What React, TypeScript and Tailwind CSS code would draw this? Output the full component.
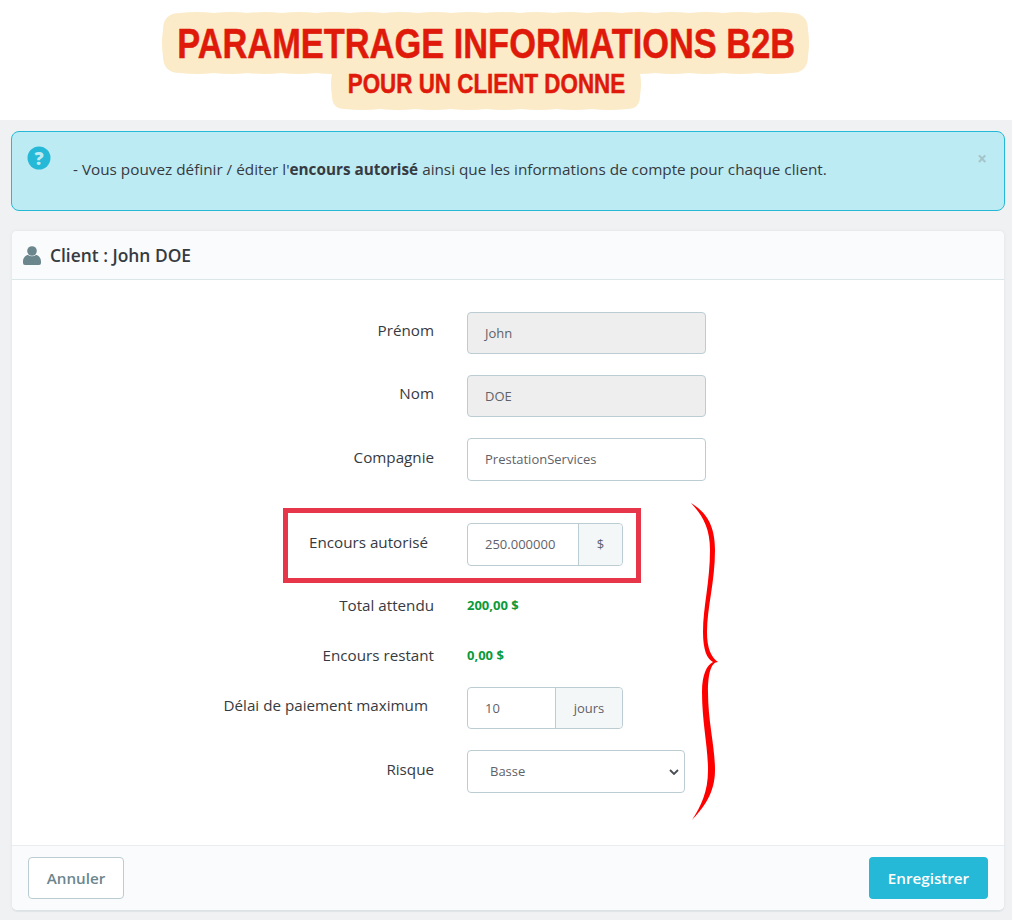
import React from "react";

const Label = ({ children, pr = "pr-[33px]", top = "pt-[8px]" }: { children: React.ReactNode; pr?: string; top?: string }) => (
  <div className={`w-[455px] shrink-0 text-right text-[15.2px] leading-[21px] text-[#363a41] ${pr} ${top}`}>{children}</div>
);

const boxBase = "h-[42px] rounded-[4px] border border-[#bbcdd2] text-[13px] text-[#5f6268] flex items-center";

// Scalloped outline of the hand-cut title sticker, walked clockwise around a rounded box.
function wavy(x0: number, y0: number, x1: number, y1: number, r: number, step: number) {
  const horiz = (from: number, to: number, y: number, out: number) => {
    const n = Math.max(1, Math.round(Math.abs(to - from) / step));
    const d = (to - from) / n;
    let s = "";
    for (let i = 0; i < n; i++) s += `Q${from + d * (i + 0.5)} ${y + out} ${from + d * (i + 1)} ${y} `;
    return s;
  };
  const vert = (from: number, to: number, x: number, out: number) => {
    const n = Math.max(1, Math.round(Math.abs(to - from) / step));
    const d = (to - from) / n;
    let s = "";
    for (let i = 0; i < n; i++) s += `Q${x + out} ${from + d * (i + 0.5)} ${x} ${from + d * (i + 1)} `;
    return s;
  };
  return (
    `M${x0 + r} ${y0} ` +
    horiz(x0 + r, x1 - r, y0, -2) +
    `Q${x1} ${y0} ${x1} ${y0 + r} ` +
    vert(y0 + r, y1 - r, x1, 2) +
    `Q${x1} ${y1} ${x1 - r} ${y1} ` +
    horiz(x1 - r, x0 + r, y1, 2) +
    `Q${x0} ${y1} ${x0} ${y1 - r} ` +
    vert(y1 - r, y0 + r, x0, -2) +
    `Q${x0} ${y0} ${x0 + r} ${y0} Z`
  );
}

export default function App() {
  return (
    <div className="w-[1012px] h-[920px] overflow-hidden bg-[#eff1f2] font-['Open_Sans',sans-serif]">
      <header className="relative h-[120px] bg-white font-['Liberation_Sans',sans-serif] font-bold text-[#e01a0a]">
        <svg className="absolute left-0 top-0" width="1012" height="120" viewBox="0 0 1012 120" fill="#fbebc9">
          <path d={wavy(163, 13, 808, 73, 17, 34)} />
          <path d={wavy(332, 60, 640, 109, 13, 34)} />
        </svg>
        <div className="relative flex flex-col items-center pr-[40px] pt-[12px] [-webkit-text-stroke:0.5px_#e01a0a]">
          <div className="h-[62px] flex items-center justify-center">
            <span className="text-[43px] leading-none whitespace-nowrap scale-x-[0.8]">PARAMETRAGE INFORMATIONS B2B</span>
          </div>
          <div className="h-[20px] flex items-center justify-center">
            <span className="text-[28px] leading-none whitespace-nowrap scale-x-[0.8]">POUR UN CLIENT DONNE</span>
          </div>
        </div>
      </header>

      <div className="pl-[11px] pr-[7px] pt-[11px]">
        <div className="relative h-[80px] rounded-[8px] border border-[#25b9d7] bg-[#bdebf3] flex pl-[61px] pt-[27px] text-[15.3px] leading-[21px] text-[#363a41]">
          <svg className="absolute left-[15px] top-[14px]" width="24" height="24" viewBox="0 0 24 24">
            <circle cx="12" cy="12" r="11.5" fill="#25b9d7" />
            <text x="12" y="18.500" textAnchor="middle" fontSize="18" fontWeight="800" fill="#bdebf3" fontFamily="Open Sans, sans-serif">?</text>
          </svg>
          <p className="whitespace-nowrap">- Vous pouvez définir / éditer l'<b>encours autorisé</b> ainsi que les informations de compte pour chaque client.</p>
          <span className="absolute right-[17px] top-[15px] text-[17px] leading-[24px] font-bold text-[#a3c4cb]">×</span>
        </div>

        <div className="relative mx-px mt-[20px] h-[679px] rounded-[5px] bg-white shadow-[0_0_4px_0_rgba(0,0,0,0.06),0_2px_0_0_#e3e8ea] flex flex-col">
          <div className="h-[49px] shrink-0 rounded-t-[5px] border-b border-[#dbe6e9] bg-[#fafbfc] flex items-center pl-[11px] gap-[9px]">
            <svg width="18" height="19" viewBox="0 0 18 19" fill="#6c868e">
              <circle cx="9" cy="5" r="4.8" />
              <path d="M0 15.500C0 11.500 3 9 5 9c1.200.8 2.500 1.200 4 1.200S11.800 9.800 13 9c2 0 5 2.500 5 6.500V17a2 2 0 0 1-2 2H2a2 2 0 0 1-2-2z" />
            </svg>
            <h2 className="text-[17.4px] font-semibold text-[#363a41]">Client : John DOE</h2>
          </div>

          <div className="relative flex-1 pt-[32px]">
            <div className="flex mb-[21px]">
              <Label>Prénom</Label>
              <div className={`${boxBase} w-[239px] bg-[#eeeeee] pl-[17px] pt-[1px]`}>John</div>
            </div>
            <div className="flex mb-[21px]">
              <Label>Nom</Label>
              <div className={`${boxBase} w-[239px] bg-[#eeeeee] pl-[17px] pt-[1px]`}>DOE</div>
            </div>
            <div className="flex mb-[42px]">
              <Label top="pt-[9px]">Compagnie</Label>
              <div className={`${boxBase} h-[43px] w-[239px] bg-white pl-[17px]`}>PrestationServices</div>
            </div>

            <div className="flex mb-[21px]">
              <Label pr="pr-[39px]" top="pt-[9px]">Encours autorisé</Label>
              <div className={`${boxBase} h-[43px] w-[156px] bg-white`}>
                <span className="w-[111px] pl-[17px] h-full flex items-center border-r border-[#bbcdd2]">250.000000</span>
                <span className="flex-1 h-full flex items-center justify-center bg-[#f4f7f8] rounded-r-[4px]">$</span>
              </div>
            </div>

            <div className="flex h-[29px] mb-[21px]">
              <Label>Total attendu</Label>
              <b className="pt-[8px] text-[13px] leading-[20px] text-[#0b9a3a]">200,00 $</b>
            </div>
            <div className="flex h-[29px] mb-[21px]">
              <Label>Encours restant</Label>
              <b className="pt-[8px] text-[13px] leading-[20px] text-[#0b9a3a]">0,00 $</b>
            </div>

            <div className="flex mb-[21px]">
              <Label pr="pr-[39px]">Délai de paiement maximum</Label>
              <div className={`${boxBase} w-[156px] bg-white`}>
                <span className="w-[88px] pl-[17px] pt-[1px] h-full flex items-center border-r border-[#bbcdd2]">10</span>
                <span className="flex-1 pt-[1px] h-full flex items-center justify-center bg-[#f4f7f8] rounded-r-[4px]">jours</span>
              </div>
            </div>

            <div className="flex">
              <Label top="pt-[9px]">Risque</Label>
              <div className={`${boxBase} h-[43px] w-[218px] bg-white pl-[22px] pr-[5px] justify-between`}>
                <span>Basse</span>
                <svg width="10" height="6" viewBox="0 0 10 6" fill="none" stroke="#4a4d52" strokeWidth="1.800">
                  <path d="M1 1l4 4 4-4" />
                </svg>
              </div>
            </div>

            <div className="absolute left-[271px] top-[228px] w-[358px] h-[75px] border-[5px] border-[#e73549] pointer-events-none" />
            <svg className="absolute left-[675px] top-[222px]" width="36" height="320" viewBox="0 0 36 320" fill="#ff0000">
              <path d="M4 1C15 8 28 18 28 48C28 80 20 105 20 130C20 146 24 155 31 160C24 160 21 172 21 190C21 220 28 245 28 268C28 292 16 306 5 318C14 304 21 290 21 268C21 245 15 220 15 190C15 172 20 163 26 160C20 157 16 148 16 130C16 105 23 80 23 48C23 24 14 12 4 1Z" />
            </svg>
          </div>

          <div className="h-[65px] shrink-0 rounded-b-[5px] border-t border-[#e9edef] bg-[#fafbfc] flex items-center justify-between pl-[16px] pr-[16px] text-[15.2px] font-semibold">
            <div className="w-[96px] h-[42px] rounded-[4px] border border-[#bbcdd2] bg-white flex items-center justify-center text-[#6c868e]">Annuler</div>
            <div className="w-[119px] h-[42px] rounded-[4px] bg-[#25b9d7] flex items-center justify-center text-white">Enregistrer</div>
          </div>
        </div>
      </div>
    </div>
  );
}
